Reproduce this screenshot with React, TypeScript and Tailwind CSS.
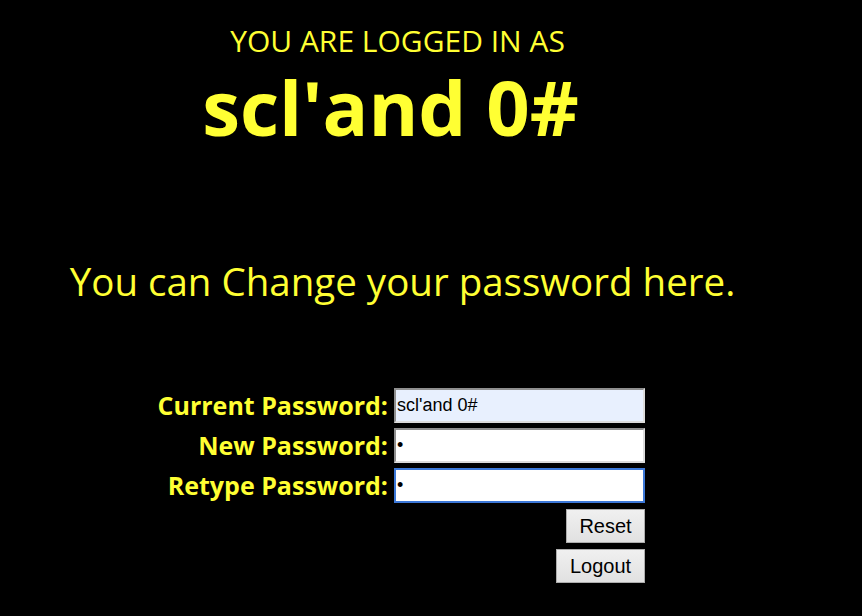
import { useState } from 'react'

const rows = [
  { label: 'Current Password:', value: "scl'and 0#", type: 'text', kind: 'autofill' },
  { label: 'New Password:', value: 'x', type: 'password', kind: 'plain' },
  { label: 'Retype Password:', value: 'x', type: 'password', kind: 'focus' },
]

const App: React.FC = () => {
  const [values, setValues] = useState(rows.map((r) => r.value))

  const inputClass = (kind: string) => {
    if (kind === 'autofill')
      return 'bg-[#e8f0fe] border-2 border-t-[#8f8f8f] border-l-[#8f8f8f] border-r-[#dcdcdc] border-b-[#dcdcdc]'
    if (kind === 'focus') return 'bg-white border-2 border-[#3c78d8]'
    return 'bg-white border-2 border-t-[#8f8f8f] border-l-[#8f8f8f] border-r-[#dcdcdc] border-b-[#dcdcdc]'
  }

  return (
    <div className="min-h-screen w-full bg-black text-[#ffff33] font-['Open_Sans',sans-serif] overflow-hidden">
      <div className="w-[795px] pt-[23px] text-center text-[30px] leading-[36px]">YOU ARE LOGGED IN AS</div>
      <div className="w-[781px] mt-[6px] text-center text-[76px] font-bold leading-[84px]">scl'and 0#</div>
      <div className="w-[805px] mt-[106px] text-center text-[38.5px] leading-[52px]">
        You can Change your password here.
      </div>
      <form className="mt-[81px] grid grid-cols-[388px_251px] gap-x-[6px] gap-y-[5px] items-center">
        {rows.map((row, i) => (
          <div key={row.label} className="contents">
            <label className="text-right text-[25px] font-bold leading-[35px]">{row.label}</label>
            <input
              type={row.type}
              value={values[i]}
              onChange={(e) => {
                const next = [...values]
                next[i] = e.target.value
                setValues(next)
              }}
              className={`h-[35px] px-[1px] text-[18px] text-black outline-none font-['Liberation_Sans',Arial,sans-serif] ${inputClass(row.kind)}`}
            />
          </div>
        ))}
        <div />
        <div className="flex flex-col items-end gap-[6px] pt-[1px]">
          <button
            type="button"
            className="h-[34px] w-[79px] border border-[#adadad] bg-gradient-to-b from-[#f0f0f0] to-[#e1e1e1] text-[20px] text-black font-['Liberation_Sans',Arial,sans-serif]"
          >
            Reset
          </button>
          <button
            type="button"
            className="h-[34px] w-[89px] border border-[#adadad] bg-gradient-to-b from-[#f0f0f0] to-[#e1e1e1] text-[20px] text-black font-['Liberation_Sans',Arial,sans-serif]"
          >
            Logout
          </button>
        </div>
      </form>
    </div>
  )
}

export default App
